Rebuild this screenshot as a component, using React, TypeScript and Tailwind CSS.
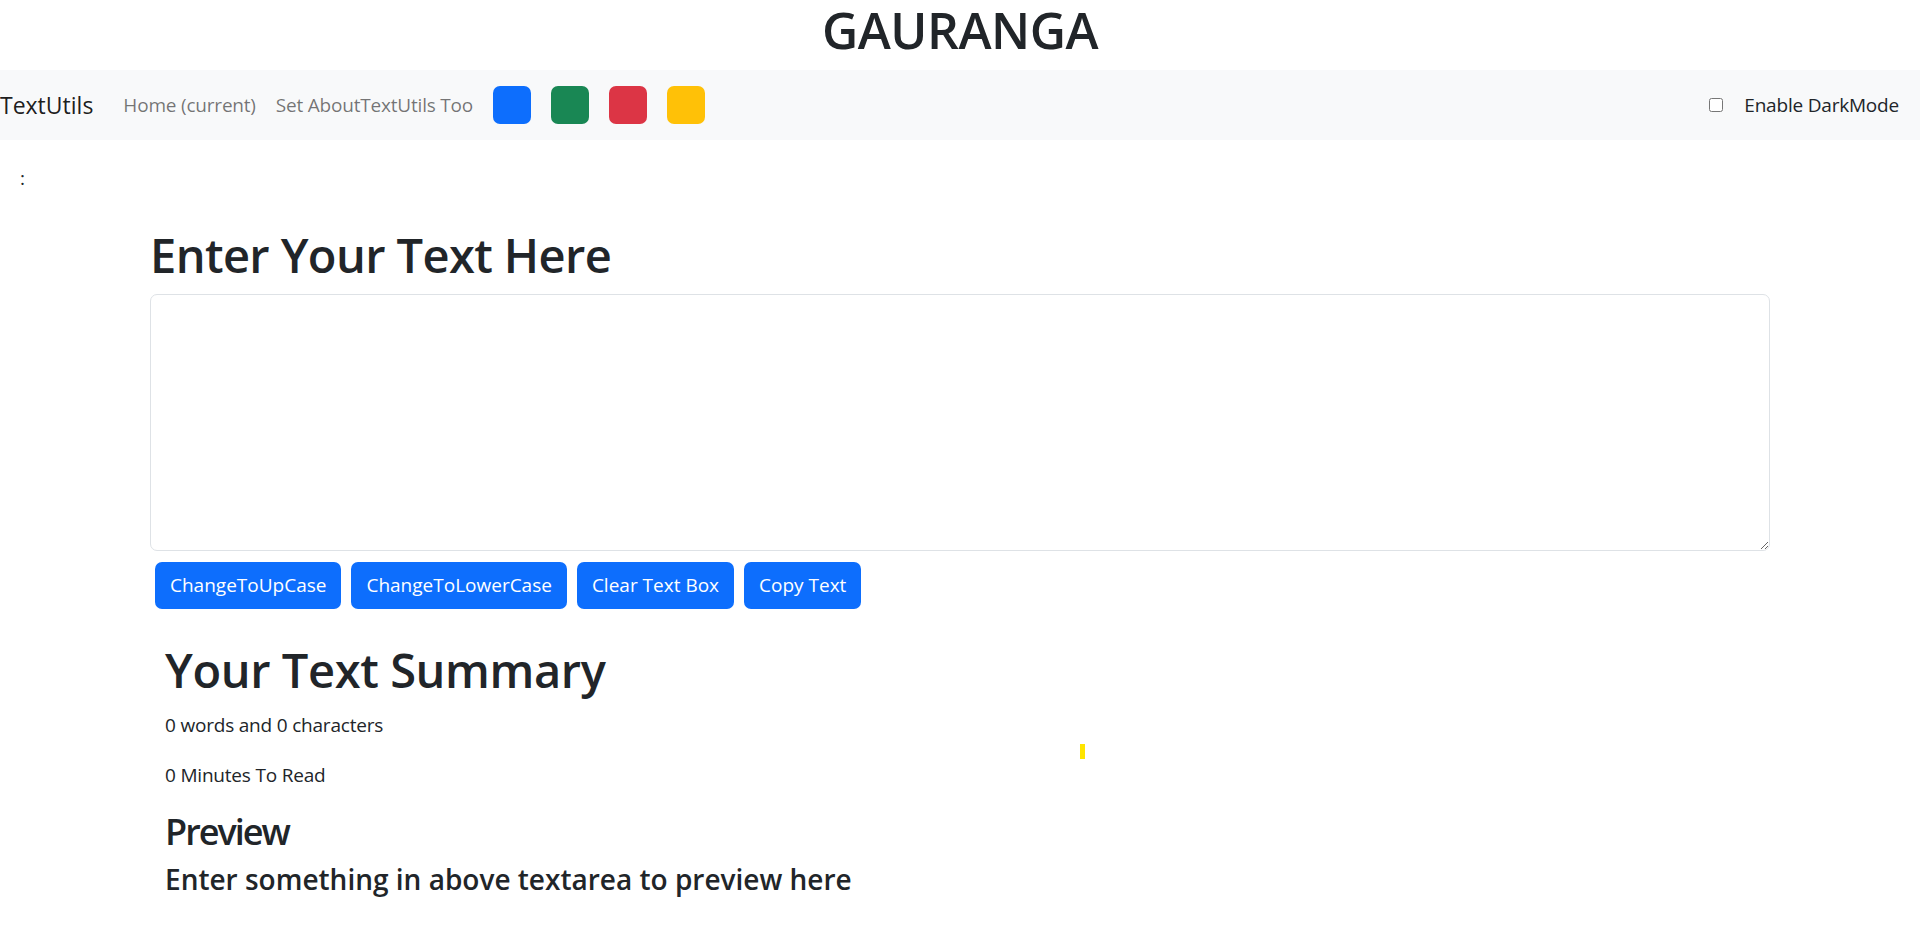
import { useState } from "react";

const colorBoxes = ["bg-[#0d6efd]", "bg-[#198754]", "bg-[#dc3545]", "bg-[#ffc107]"];
const actions = ["ChangeToUpCase", "ChangeToLowerCase", "Clear Text Box", "Copy Text"];

const App: React.FC = () => {
  const [text, setText] = useState("");
  const [dark, setDark] = useState(false);

  const words = text.split(/\s+/).filter((w) => w.length > 0).length;

  return (
    <div className="relative min-h-screen bg-white text-[#212529] font-['Open_Sans',sans-serif]">
      <h1 className="text-center text-[50px] leading-[60px] font-semibold tracking-[-0.5px] mb-[10px]">
        GAURANGA
      </h1>

      <nav className="h-[70px] bg-[#f8f9fa] flex items-center">
        <span className="text-[23px] text-black/90 mr-5">TextUtils</span>
        <a href="#" className="px-[10px] text-[19px] tracking-[-0.2px] text-black/55">
          Home (current)
        </a>
        <a href="#" className="px-[10px] text-[19px] tracking-[-0.2px] text-black/55">
          Set AboutTextUtils Too
        </a>
        <div className="flex gap-5 ml-[10px]">
          {colorBoxes.map((c) => (
            <div key={c} className={`w-[38px] h-[38px] rounded-[7px] ${c}`} />
          ))}
        </div>
        <div className="ml-auto mr-[21px] flex items-center gap-[21px]">
          <input
            type="checkbox"
            checked={dark}
            onChange={() => setDark(!dark)}
            className="w-[14px] h-[14px]"
          />
          <label className="text-[19px] tracking-[-0.2px]">Enable DarkMode</label>
        </div>
      </nav>

      <div className="h-[62px] px-5 pt-[23px] text-[19px] leading-[30px]">:</div>

      <div className="mx-auto w-[1650px] px-[15px] mt-5">
        <h1 className="text-[47px] leading-[60px] font-semibold tracking-[-0.6px] pt-[3px] mb-[9px]">
          Enter Your Text Here
        </h1>
        <textarea
          rows={8}
          value={text}
          onChange={(e) => setText(e.target.value)}
          className="block w-full h-[257px] border border-[#dee2e6] rounded-[7px] px-[15px] py-[7px] text-[19px] outline-none"
        />
        <div className="mt-[11px] flex gap-[10px] px-[5px]">
          {actions.map((a) => (
            <button
              key={a}
              className="h-[47px] px-[15px] rounded-[7px] bg-[#0d6efd] text-white text-[19px]"
            >
              {a}
            </button>
          ))}
        </div>
      </div>

      <div className="mx-auto w-[1650px] px-[30px] pt-[31px] pb-10">
        <h1 className="text-[47px] leading-[60px] font-semibold tracking-[-0.4px] mb-[10px]">
          Your Text Summary
        </h1>
        <p className="text-[19px] leading-[30px] tracking-[-0.2px] mb-5">
          {words} words and {text.length} characters
        </p>
        <p className="text-[19px] leading-[30px] tracking-[-0.2px] mb-5">
          {0.008 * words} Minutes To Read
        </p>
        <h2 className="text-[36px] leading-[48px] font-semibold tracking-[-2px] mb-[5px] -mt-[2px]">Preview</h2>
        <h4 className="text-[28px] leading-[36px] font-semibold">
          {text.length > 0 ? text : "Enter something in above textarea to preview here"}
        </h4>
      </div>

      <div className="absolute left-[1080px] top-[744px] w-[5px] h-[15px] bg-[#ffe500]" />
    </div>
  );
};

export default App;
